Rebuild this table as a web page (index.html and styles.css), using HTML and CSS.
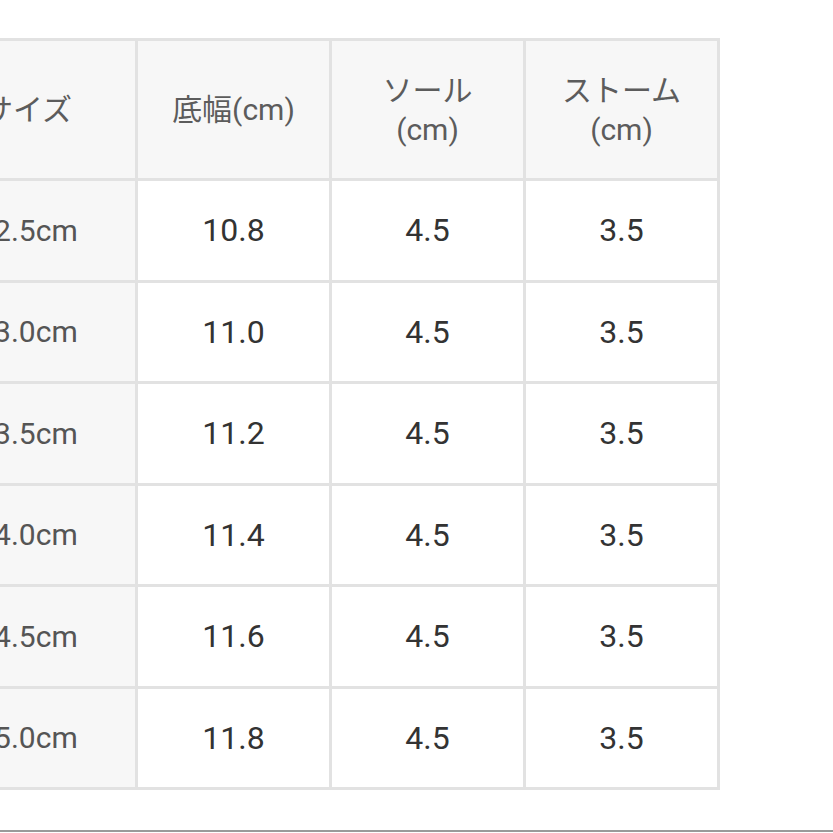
FILE: index.html
```html
<!DOCTYPE html>
<html lang="ja">
<head>
<meta charset="utf-8">
<link rel="stylesheet" href="styles.css">
</head>
<body>
<div class="page">
  <table class="size-table">
    <colgroup>
      <col class="col-first"><col class="col"><col class="col"><col class="col">
    </colgroup>
    <thead>
      <tr>
        <th class="head first">サイズ</th>
        <th class="head">底幅(cm)</th>
        <th class="head">ソール<br>(cm)</th>
        <th class="head">ストーム<br>(cm)</th>
      </tr>
    </thead>
    <tbody>
      <tr><td class="first">22.5cm</td><td>10.8</td><td>4.5</td><td>3.5</td></tr>
      <tr><td class="first">23.0cm</td><td>11.0</td><td>4.5</td><td>3.5</td></tr>
      <tr><td class="first">23.5cm</td><td>11.2</td><td>4.5</td><td>3.5</td></tr>
      <tr><td class="first">24.0cm</td><td>11.4</td><td>4.5</td><td>3.5</td></tr>
      <tr><td class="first">24.5cm</td><td>11.6</td><td>4.5</td><td>3.5</td></tr>
      <tr><td class="first">25.0cm</td><td>11.8</td><td>4.5</td><td>3.5</td></tr>
    </tbody>
  </table>
  <div class="rule"></div>
</div>
</body>
</html>
```

FILE: styles.css
```css
html, body {
  margin: 0;
  padding: 0;
  background: #ffffff;
  overflow: hidden;
}
.page {
  width: 833px;
  height: 833px;
  overflow: hidden;
  padding-top: 38px;
  box-sizing: border-box;
  font-family: Roboto, "Noto Sans CJK JP", sans-serif;
}
.size-table {
  margin-left: -83px;
  border-collapse: separate;
  border-spacing: 0;
  table-layout: fixed;
  width: 803px;
  border-top: 3px solid #e2e2e2;
  border-left: 3px solid #e2e2e2;
}
.col-first {
  width: 218px;
}
.col {
  width: 194px;
}
.size-table th,
.size-table td {
  border-right: 3px solid #e2e2e2;
  border-bottom: 3px solid #e2e2e2;
  padding: 0;
  text-align: center;
  vertical-align: middle;
  font-size: 32px;
  font-weight: 400;
}
.size-table th {
  height: 137px;
  background: #f7f7f7;
  color: #5c5c5c;
  line-height: 39px;
  font-size: 30px;
}
.size-table td {
  height: 98.5px;
  color: #333333;
}
.size-table td.first {
  background: #f7f7f7;
  color: #555555;
  font-size: 30px;
}
.rule {
  margin-top: 40px;
  height: 2px;
  background: #9a9a9a;
}
```
